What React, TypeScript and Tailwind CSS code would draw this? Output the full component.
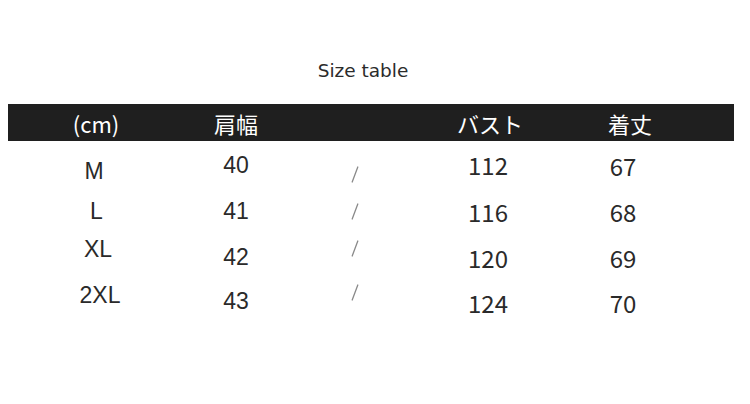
const HEAD = ['(cm)', '肩幅', '', 'バスト', '着丈'];

// each cell: [text, extra classes for the slight hand-placed jitter of the original]
const ROWS: [string, string][][] = [
  [
    ['M', 'pr-[4px] mt-[3px]'],
    ['40', 'mt-[-3px]'],
    ['/', 'mt-[6px]'],
    ['112', 'pr-[4px] mt-[-3px]'],
    ['67', 'pr-[14px] mt-[-2px]'],
  ],
  [
    ['L', 'pl-[1px] mt-[-1px]'],
    ['41', 'mt-[-1px]'],
    ['/', 'mt-[-1px]'],
    ['116', 'pr-[4px] mt-[0px]'],
    ['68', 'pr-[14px] mt-[0px]'],
  ],
  [
    ['XL', 'pl-[4px] mt-[-7px]'],
    ['42', 'mt-[1px]'],
    ['/', 'mt-[-8px]'],
    ['120', 'pr-[4px] mt-[2px]'],
    ['69', 'pr-[14px] mt-[2px]'],
  ],
  [
    ['2XL', 'pl-[8px] mt-[-5px]'],
    ['43', 'mt-[1px]'],
    ['/', 'mt-[-8px]'],
    ['124', 'pr-[4px] mt-[3px]'],
    ['70', 'pr-[14px] mt-[3px]'],
  ],
];

const COLS = 'grid grid-cols-[176px_104px_134px_136px_144px]';

function cellFont(i: number) {
  if (i >= 3) return "text-[24px] text-[#2a2a2a] font-['Noto_Sans_CJK_JP',sans-serif]";
  return "text-[23px] text-[#2a2a2a] font-['Liberation_Sans',Arial,sans-serif]";
}

function Slash() {
  return (
    <svg width="8" height="17" viewBox="0 0 8 17" aria-label="/">
      <line x1="6.8" y1="1" x2="1.2" y2="16" stroke="#8a8a8a" strokeWidth="1.3" strokeLinecap="round" />
    </svg>
  );
}

export default function App() {
  return (
    <div className="w-[750px] h-[404px] bg-white pt-[57px] overflow-hidden">
      <h1 className="h-[28px] leading-[28px] text-center text-[18.5px] text-[#2b2b2b] font-['DejaVu_Sans',sans-serif] pr-[24px]">
        Size table
      </h1>

      <div className={`${COLS} mt-[19px] ml-[8px] w-[726px] h-[37px] bg-[#1f1f1f]`}>
        {HEAD.map((h, i) => (
          <div
            key={i}
            className="flex items-center justify-center text-white text-[22px] font-['Noto_Sans_CJK_JP',sans-serif] leading-none"
          >
            {h}
          </div>
        ))}
      </div>

      <div className="ml-[8px] mt-[5px]">
        {ROWS.map((row, r) => (
          <div key={r} className={`${COLS} h-[44px]`}>
            {row.map(([t, extra], i) =>
              i === 2 ? (
                <div key={i} className={`h-[44px] flex items-center justify-center ${extra}`}>
                  <Slash />
                </div>
              ) : (
                <div key={i} className={`h-[44px] leading-[44px] text-center ${cellFont(i)} ${extra}`}>
                  {t}
                </div>
              ),
            )}
          </div>
        ))}
      </div>
    </div>
  );
}
